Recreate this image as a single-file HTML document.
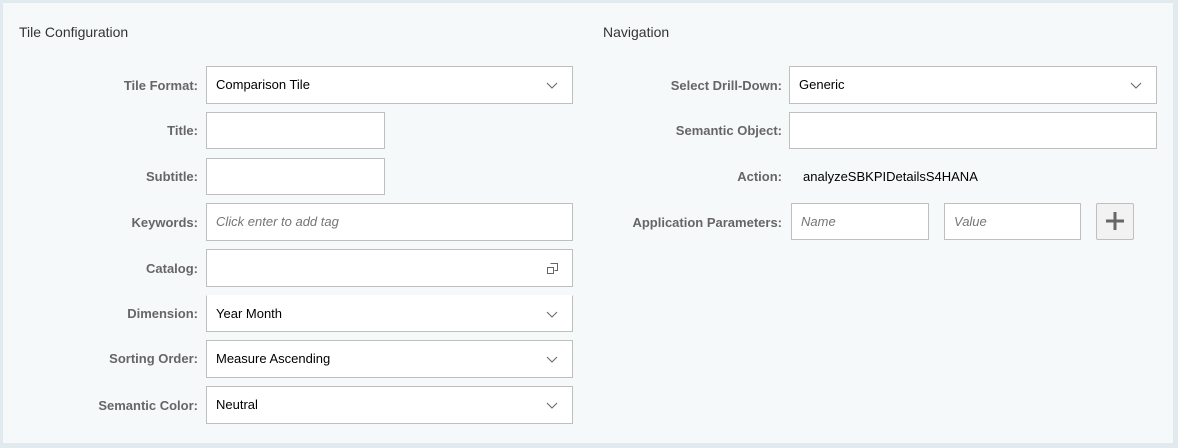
<!DOCTYPE html><html><head><style>
body{margin:0;width:1178px;height:448px;background:#e1ebef;font-family:"Liberation Sans",Arial,sans-serif;position:relative;overflow:hidden}
.panel{position:absolute;left:3px;top:3px;width:1170px;height:440px;background:#f6f9fa}
.h{position:absolute;font-size:14px;color:#333;top:24px}
.l{position:absolute;font-size:13px;font-weight:bold;color:#666;text-align:right;width:300px}
.i{position:absolute;box-sizing:border-box;background:#fff;border:1px solid #bfbfbf;height:38px;font-size:13px;color:#000;padding-left:9px;line-height:36px}
.ph{color:#757575;font-style:italic}
.c{position:absolute;right:14px;top:15px}
</style></head><body><div class="panel"></div>
<div class="h" style="left:19px">Tile Configuration</div>
<div class="h" style="left:603px">Navigation</div>

<div class="l" style="left:-102px;top:78px">Tile Format:</div>
<div class="i" style="left:206px;top:66px;width:367px">Comparison Tile<svg class="c" width="12" height="8"><path d="M1 1l5 5 5-5" stroke="#666" fill="none"/></svg></div>
<div class="l" style="left:-102px;top:123px">Title:</div>
<div class="i" style="left:206px;top:112px;width:179px;height:37px"></div>
<div class="l" style="left:-102px;top:169px">Subtitle:</div>
<div class="i" style="left:206px;top:158px;width:179px;height:37px"></div>
<div class="l" style="left:-102px;top:215px">Keywords:</div>
<div class="i ph" style="left:206px;top:203px;width:367px">Click enter to add tag</div>
<div class="l" style="left:-102px;top:261px">Catalog:</div>
<div class="i" style="left:206px;top:249px;width:367px"><svg class="c" style="top:12px;right:13px" width="13" height="13"><path d="M4.5 1.5h7v7h-3M1.5 5.5h6v6h-6z" stroke="#666" fill="none"/></svg></div>
<div class="l" style="left:-102px;top:306px">Dimension:</div>
<div class="i" style="left:206px;top:295px;width:367px;height:37px;border-top-color:#fff">Year Month<svg class="c" width="12" height="8"><path d="M1 1l5 5 5-5" stroke="#666" fill="none"/></svg></div>
<div class="l" style="left:-102px;top:351px">Sorting Order:</div>
<div class="i" style="left:206px;top:340px;width:367px">Measure Ascending<svg class="c" width="12" height="8"><path d="M1 1l5 5 5-5" stroke="#666" fill="none"/></svg></div>
<div class="l" style="left:-102px;top:398px">Semantic Color:</div>
<div class="i" style="left:206px;top:386px;width:367px">Neutral<svg class="c" width="12" height="8"><path d="M1 1l5 5 5-5" stroke="#666" fill="none"/></svg></div>

<div class="l" style="left:482px;top:78px">Select Drill-Down:</div>
<div class="i" style="left:789px;top:66px;width:368px">Generic<svg class="c" width="12" height="8"><path d="M1 1l5 5 5-5" stroke="#666" fill="none"/></svg></div>
<div class="l" style="left:482px;top:123px">Semantic Object:</div>
<div class="i" style="left:789px;top:112px;width:368px;height:37px"></div>
<div class="l" style="left:482px;top:169px">Action:</div>
<div style="position:absolute;left:803px;top:169px;font-size:13px">analyzeSBKPIDetailsS4HANA</div>
<div class="l" style="left:482px;top:215px">Application Parameters:</div>
<div class="i ph" style="left:791px;top:203px;width:138px;height:37px">Name</div>
<div class="i ph" style="left:944px;top:203px;width:137px;height:37px">Value</div>
<div style="position:absolute;left:1096px;top:203px;width:36px;height:35px;border:1px solid #bfbfbf;border-radius:2px;background:#f2f2f2"><svg style="position:absolute;left:8px;top:7px" width="20" height="20"><path d="M10 1v18M1 10h18" stroke="#666" stroke-width="3"/></svg></div>
</body></html>
